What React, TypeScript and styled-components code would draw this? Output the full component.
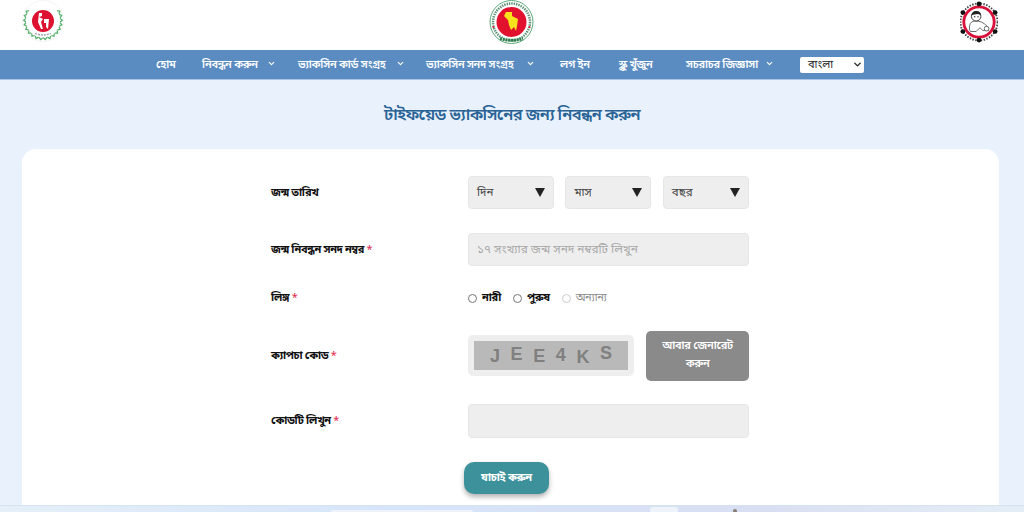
import React from 'react'
import styled, { createGlobalStyle } from 'styled-components'
import { ChevronDown } from 'lucide-react'

const GlobalStyle = createGlobalStyle`
    html, body {
        margin: 0;
        padding: 0;
        background: #e9f1fd;
        font-family: "Noto Sans Bengali", "Lohit Bengali", "Noto Sans", "Liberation Sans", sans-serif;
    }
    * {
        box-sizing: border-box;
    }
`

const navItems = [
    { label: 'হোম', width: 20, gap: 26, caret: false },
    { label: 'নিবন্ধন করুন', width: 55, gap: 41, caret: true },
    { label: 'ভ্যাকসিন কার্ড সংগ্রহ', width: 88, gap: 40, caret: true },
    { label: 'ভ্যাকসিন সনদ সংগ্রহ', width: 90, gap: 44, caret: true },
    { label: 'লগ ইন', width: 30, gap: 29, caret: false },
    { label: 'স্কুল খুঁজুন', width: 41, gap: 26, caret: false },
    { label: 'সচরাচর জিজ্ঞাসা', width: 69, gap: 45, caret: true },
]

// little leaf marks round a circle, used by the wreath of the left logo
const wreath = Array.from({ length: 18 }, (_, i) => (i * 14 - 29) * Math.PI / 180)

function DghsLogo() {
    return (
        <svg width="44" height="44" viewBox="0 0 44 44">
            <circle cx="21" cy="21" r="20.5" fill="#fff" stroke="#f4f4f4" />
            {wreath.map((a, i) => {
                const x = 21 + 18.5 * Math.cos(a)
                const y = 20.5 + 18.5 * Math.sin(a)
                const deg = a * 180 / Math.PI
                return <path key={i} d="M-1.8 -1.4 L0 .8 L1.8 -1.4" transform={`translate(${x} ${y}) rotate(${deg - 90})`} fill="none" stroke="#4fae66" strokeWidth="1.2" />
            })}
            <circle cx="21" cy="21" r="11" fill="#dc1230" />
            <path d="M17 13 L20 13 L20 16 L17 17 L21 19 L19 22 L21 29 L19 29 L16 22 Z M22 19 L27 19 L26 29 L24 27 L24 23 L22 23 Z" fill="#fff" />
            <path d="M13 33.5 Q21 36.5 29 33.5" fill="none" stroke="#999" strokeWidth="1.3" strokeDasharray="2 1" />
        </svg>
    )
}

function GovtLogo() {
    return (
        <svg width="46" height="46" viewBox="0 0 46 46">
            <circle cx="22.5" cy="22" r="21.5" fill="#fff" stroke="#5aa878" />
            <circle cx="22.5" cy="22" r="18.5" fill="none" stroke="#5d8f73" strokeWidth="2.5" strokeDasharray="1.4 1" />
            <circle cx="22.5" cy="22" r="15.5" fill="#fff" />
            <circle cx="22.5" cy="22" r="15" fill="#e2122f" />
            <path d="M17 12 L23 12 L23 16 L29 19 L28 26 L27 31 L25 27 L22 30 L20 25 L19 20 L15 16 Z" fill="#f8e21c" />
            <circle cx="4.5" cy="27" r="1" fill="#e2122f" />
            <circle cx="40.5" cy="27" r="1" fill="#e2122f" />
            <path d="M11 38.5 Q22.5 42 34 38.5" fill="none" stroke="#2e7d4f" strokeWidth="3" strokeDasharray="2 .8" />
        </svg>
    )
}

function EpiLogo() {
    return (
        <svg width="38" height="42" viewBox="0 0 40 44">
            <circle cx="20" cy="22" r="19.5" fill="none" stroke="#444" strokeWidth="2" strokeDasharray="1.5 1.5" />
            <circle cx="20" cy="22" r="16" fill="#fff" stroke="#d8123a" strokeWidth="3" />
            <circle cx="20" cy="3" r="2.5" fill="#111" />
            <circle cx="20" cy="41" r="2.5" fill="#111" />
            <circle cx="3" cy="12" r="2.5" fill="#111" />
            <circle cx="37" cy="12" r="2.5" fill="#111" />
            <circle cx="3" cy="32" r="2.5" fill="#111" />
            <circle cx="37" cy="32" r="2.5" fill="#111" />
            <path d="M10 30 Q9 22 15 21 Q23 20 29 27 L30 31 L24 31 L21 28 L17 32 L11 32 Z" fill="#fff" stroke="#555" strokeWidth=".9" />
            <circle cx="17" cy="16" r="5" fill="#fff" stroke="#333" strokeWidth="1" />
            <path d="M12 15 Q13 10 18 10.5 Q22 11 22 15 L19 13.5 L15 14 Z" fill="#222" />
            <circle cx="15.5" cy="16.5" r=".7" fill="#222" />
            <circle cx="19" cy="16.5" r=".7" fill="#222" />
            <circle cx="28" cy="29" r="2.5" fill="#fff" stroke="#555" strokeWidth=".9" />
        </svg>
    )
}

export default function App(): JSX.Element {
    return (
        <Page>
            <GlobalStyle />
            <Header>
                <LogoSlot><DghsLogo /></LogoSlot>
                <CenterLogoSlot><GovtLogo /></CenterLogoSlot>
                <RightLogoSlot><EpiLogo /></RightLogoSlot>
            </Header>
            <Nav>
                {navItems.map(item => (
                    <NavItem key={item.label} $width={item.width + item.gap}>
                        <NavLabel $width={item.width}>{item.label}</NavLabel>
                        {item.caret && <NavCaret size={9} strokeWidth={3} />}
                    </NavItem>
                ))}
                <LangSelect>
                    <span>বাংলা</span>
                    <ChevronDown size={11} strokeWidth={3} color="#222" />
                </LangSelect>
            </Nav>
            <Title>টাইফয়েড ভ্যাকসিনের জন্য নিবন্ধন করুন</Title>
            <Card>
                <Form>
                    <Row $height={33} $after={24}>
                        <Label>জন্ম তারিখ</Label>
                        <DateGroup>
                            <DateSelect>দিন<Arrow /></DateSelect>
                            <DateSelect>মাস<Arrow /></DateSelect>
                            <DateSelect>বছর<Arrow /></DateSelect>
                        </DateGroup>
                    </Row>
                    <Row $height={33} $after={22}>
                        <Label>জন্ম নিবন্ধন সনদ নম্বর <Star>*</Star></Label>
                        <TextField><Placeholder>১৭ সংখ্যার জন্ম সনদ নম্বরটি লিখুন</Placeholder></TextField>
                    </Row>
                    <Row $height={20} $after={23}>
                        <Label>লিঙ্গ <Star>*</Star></Label>
                        <RadioGroup>
                            <Radio />
                            <RadioText>নারী</RadioText>
                            <Radio />
                            <RadioText>পুরুষ</RadioText>
                            <Radio $disabled />
                            <RadioText $disabled>অন্যান্য</RadioText>
                        </RadioGroup>
                    </Row>
                    <Row $height={50} $after={23}>
                        <Label>ক্যাপচা কোড <Star>*</Star></Label>
                        <CaptchaGroup>
                            <CaptchaFrame>
                                <CaptchaImage>
                                    <CaptchaChar $shift={1}>J</CaptchaChar>
                                    <CaptchaChar $shift={-1.5}>E</CaptchaChar>
                                    <CaptchaChar $shift={1}>E</CaptchaChar>
                                    <CaptchaChar $shift={-0.5}>4</CaptchaChar>
                                    <CaptchaChar $shift={1.5}>K</CaptchaChar>
                                    <CaptchaChar $shift={-2}>S</CaptchaChar>
                                </CaptchaImage>
                            </CaptchaFrame>
                            <RegenButton>আবার জেনারেট করুন</RegenButton>
                        </CaptchaGroup>
                    </Row>
                    <Row $height={34} $after={24}>
                        <Label>কোডটি লিখুন <Star>*</Star></Label>
                        <TextField $tall />
                    </Row>
                    <SubmitRow>
                        <SubmitButton>যাচাই করুন</SubmitButton>
                    </SubmitRow>
                </Form>
            </Card>
            <Taskbar>
                <TaskbarSearch />
                <TaskbarTile />
                <TaskbarDot />
            </Taskbar>
        </Page>
    )
}

const Page = styled.div`
    width: 1024px;
    height: 512px;
    overflow: hidden;
    display: flex;
    flex-direction: column;
    background: #e9f1fd;
`

const Header = styled.header`
    height: 50px;
    flex: none;
    background: #fff;
    padding: 0 26px 0 22px;
    display: flex;
    justify-content: space-between;
    align-items: flex-start;
`

const LogoSlot = styled.div`
    display: flex;
    line-height: 0;
`

const CenterLogoSlot = styled(LogoSlot)`
    margin-right: 3px;
`

const RightLogoSlot = styled(LogoSlot)`
    margin-top: 1px;
`

const Nav = styled.nav`
    height: 30px;
    flex: none;
    background: #5a8cc2;
    border-bottom: 1px solid #a9c4e6;
    padding-left: 156px;
    display: flex;
    align-items: center;
`

const NavItem = styled.div<{ $width: number }>`
    flex: none;
    width: ${p => p.$width}px;
    display: flex;
    align-items: center;
`

const NavLabel = styled.span<{ $width: number }>`
    flex: none;
    width: ${p => p.$width}px;
    padding-top: 1px;
    color: #fff;
    font-size: 11px;
    letter-spacing: -.3px;
    font-weight: 600;
    white-space: nowrap;
`

const NavCaret = styled(ChevronDown)`
    flex: none;
    color: #fff;
    margin: -3px 0 0 10px;
`

const LangSelect = styled.div`
    width: 64px;
    height: 16px;
    background: #fff;
    border-radius: 2px;
    padding: 0 1px 0 8px;
    display: flex;
    align-items: center;
    justify-content: space-between;
    font-size: 11px;
    color: #222;
`

const Title = styled.h1`
    margin: 0;
    height: 69px;
    flex: none;
    padding-top: 2px;
    display: flex;
    align-items: center;
    justify-content: center;
    font-size: 16.5px;
    letter-spacing: -.6px;
    font-weight: 600;
    color: #2a6496;
`

const Card = styled.main`
    flex: 1;
    margin: 0 25px 0 22px;
    background: #fff;
    border-radius: 14px 14px 0 0;
    padding: 27px 250px 0 249px;
`

const Form = styled.div`
    display: flex;
    flex-direction: column;
`

const Row = styled.div<{ $height: number; $after: number }>`
    display: grid;
    grid-template-columns: 197px 281px;
    align-items: center;
    height: ${p => p.$height}px;
    margin-bottom: ${p => p.$after}px;
`

const Label = styled.label`
    font-size: 11px;
    letter-spacing: -.4px;
    font-weight: 700;
    color: #111;
    white-space: nowrap;
`

const Star = styled.span`
    color: #e2284c;
    font-weight: 400;
`

const DateGroup = styled.div`
    display: grid;
    grid-template-columns: 86px 86px 86px;
    column-gap: 11.4px;
`

const DateSelect = styled.div`
    height: 33px;
    background: #eee;
    border: 1px solid #e6e6e6;
    border-radius: 4px;
    padding: 0 8px;
    display: flex;
    align-items: center;
    justify-content: space-between;
    font-size: 11.5px;
    color: #444;
`

const Arrow = styled.span`
    width: 0;
    height: 0;
    border-left: 5px solid transparent;
    border-right: 5px solid transparent;
    border-top: 9px solid #222;
`

const TextField = styled.div<{ $tall?: boolean }>`
    height: ${p => p.$tall ? 34 : 33}px;
    background: #eee;
    border: 1px solid #e6e6e6;
    border-radius: 4px;
    padding: 0 8px;
    display: flex;
    align-items: center;
`

const Placeholder = styled.span`
    font-size: 11.8px;
    color: #a8a8a8;
    white-space: nowrap;
`

const RadioGroup = styled.div`
    display: flex;
    align-items: center;
`

const Radio = styled.span<{ $disabled?: boolean }>`
    width: 9px;
    height: 9px;
    flex: none;
    border-radius: 50%;
    background: #fff;
    border: 1px solid ${p => p.$disabled ? '#ccc' : '#777'};
    margin-right: 5px;
`

const RadioText = styled.span<{ $disabled?: boolean }>`
    font-size: 11px;
    letter-spacing: -.4px;
    font-weight: ${p => p.$disabled ? 400 : 700};
    color: ${p => p.$disabled ? '#8a8a8a' : '#111'};
    margin-right: 12px;
    white-space: nowrap;
`

const CaptchaGroup = styled.div`
    display: flex;
    align-items: flex-start;
    justify-content: space-between;
`

const CaptchaFrame = styled.div`
    width: 166px;
    height: 41px;
    margin-top: 4px;
    background: #eee;
    border-radius: 5px;
    padding: 6px;
`

const CaptchaImage = styled.div`
    height: 29px;
    background: #b9b9b9;
    padding: 0 16px;
    display: flex;
    align-items: center;
    justify-content: space-between;
`

const CaptchaChar = styled.span<{ $shift: number }>`
    font-family: "Liberation Sans", sans-serif;
    font-size: 18px;
    font-weight: 700;
    color: #808080;
    transform: translateY(${p => p.$shift}px);
`

const RegenButton = styled.div`
    width: 103px;
    height: 50px;
    background: #8a8a8a;
    border-radius: 5px;
    padding: 0 12px;
    display: flex;
    align-items: center;
    justify-content: center;
    text-align: center;
    color: #fff;
    font-size: 11px;
    letter-spacing: -.3px;
    font-weight: 600;
    line-height: 1.6;
`

const SubmitRow = styled.div`
    display: flex;
    padding-left: 193px;
`

const SubmitButton = styled.div`
    width: 85px;
    height: 32px;
    background: #3d919b;
    border-radius: 10px;
    box-shadow: 0 3px 5px rgba(0, 0, 0, .3);
    display: flex;
    align-items: center;
    justify-content: center;
    color: #fff;
    font-size: 11px;
    letter-spacing: -.3px;
    font-weight: 700;
`

const Taskbar = styled.div`
    height: 7px;
    flex: none;
    background: linear-gradient(90deg, #e4eff8 0%, #d6e4fa 40%, #d9dff2 75%, #e4eef6 100%);
    border-top: 1px solid #d5e3ee;
    display: flex;
    align-items: flex-end;
`

const TaskbarSearch = styled.div`
    width: 142px;
    height: 2px;
    margin-left: 331px;
    background: #eef2fb;
    border-radius: 2px 2px 0 0;
`

const TaskbarTile = styled.div`
    width: 28px;
    height: 5px;
    margin-left: 177px;
    background: #eef3fb;
    border-radius: 3px 3px 0 0;
`

const TaskbarDot = styled.div`
    width: 4px;
    height: 3px;
    margin-left: 55px;
    background: #8a7f78;
    border-radius: 2px 2px 0 0;
`
